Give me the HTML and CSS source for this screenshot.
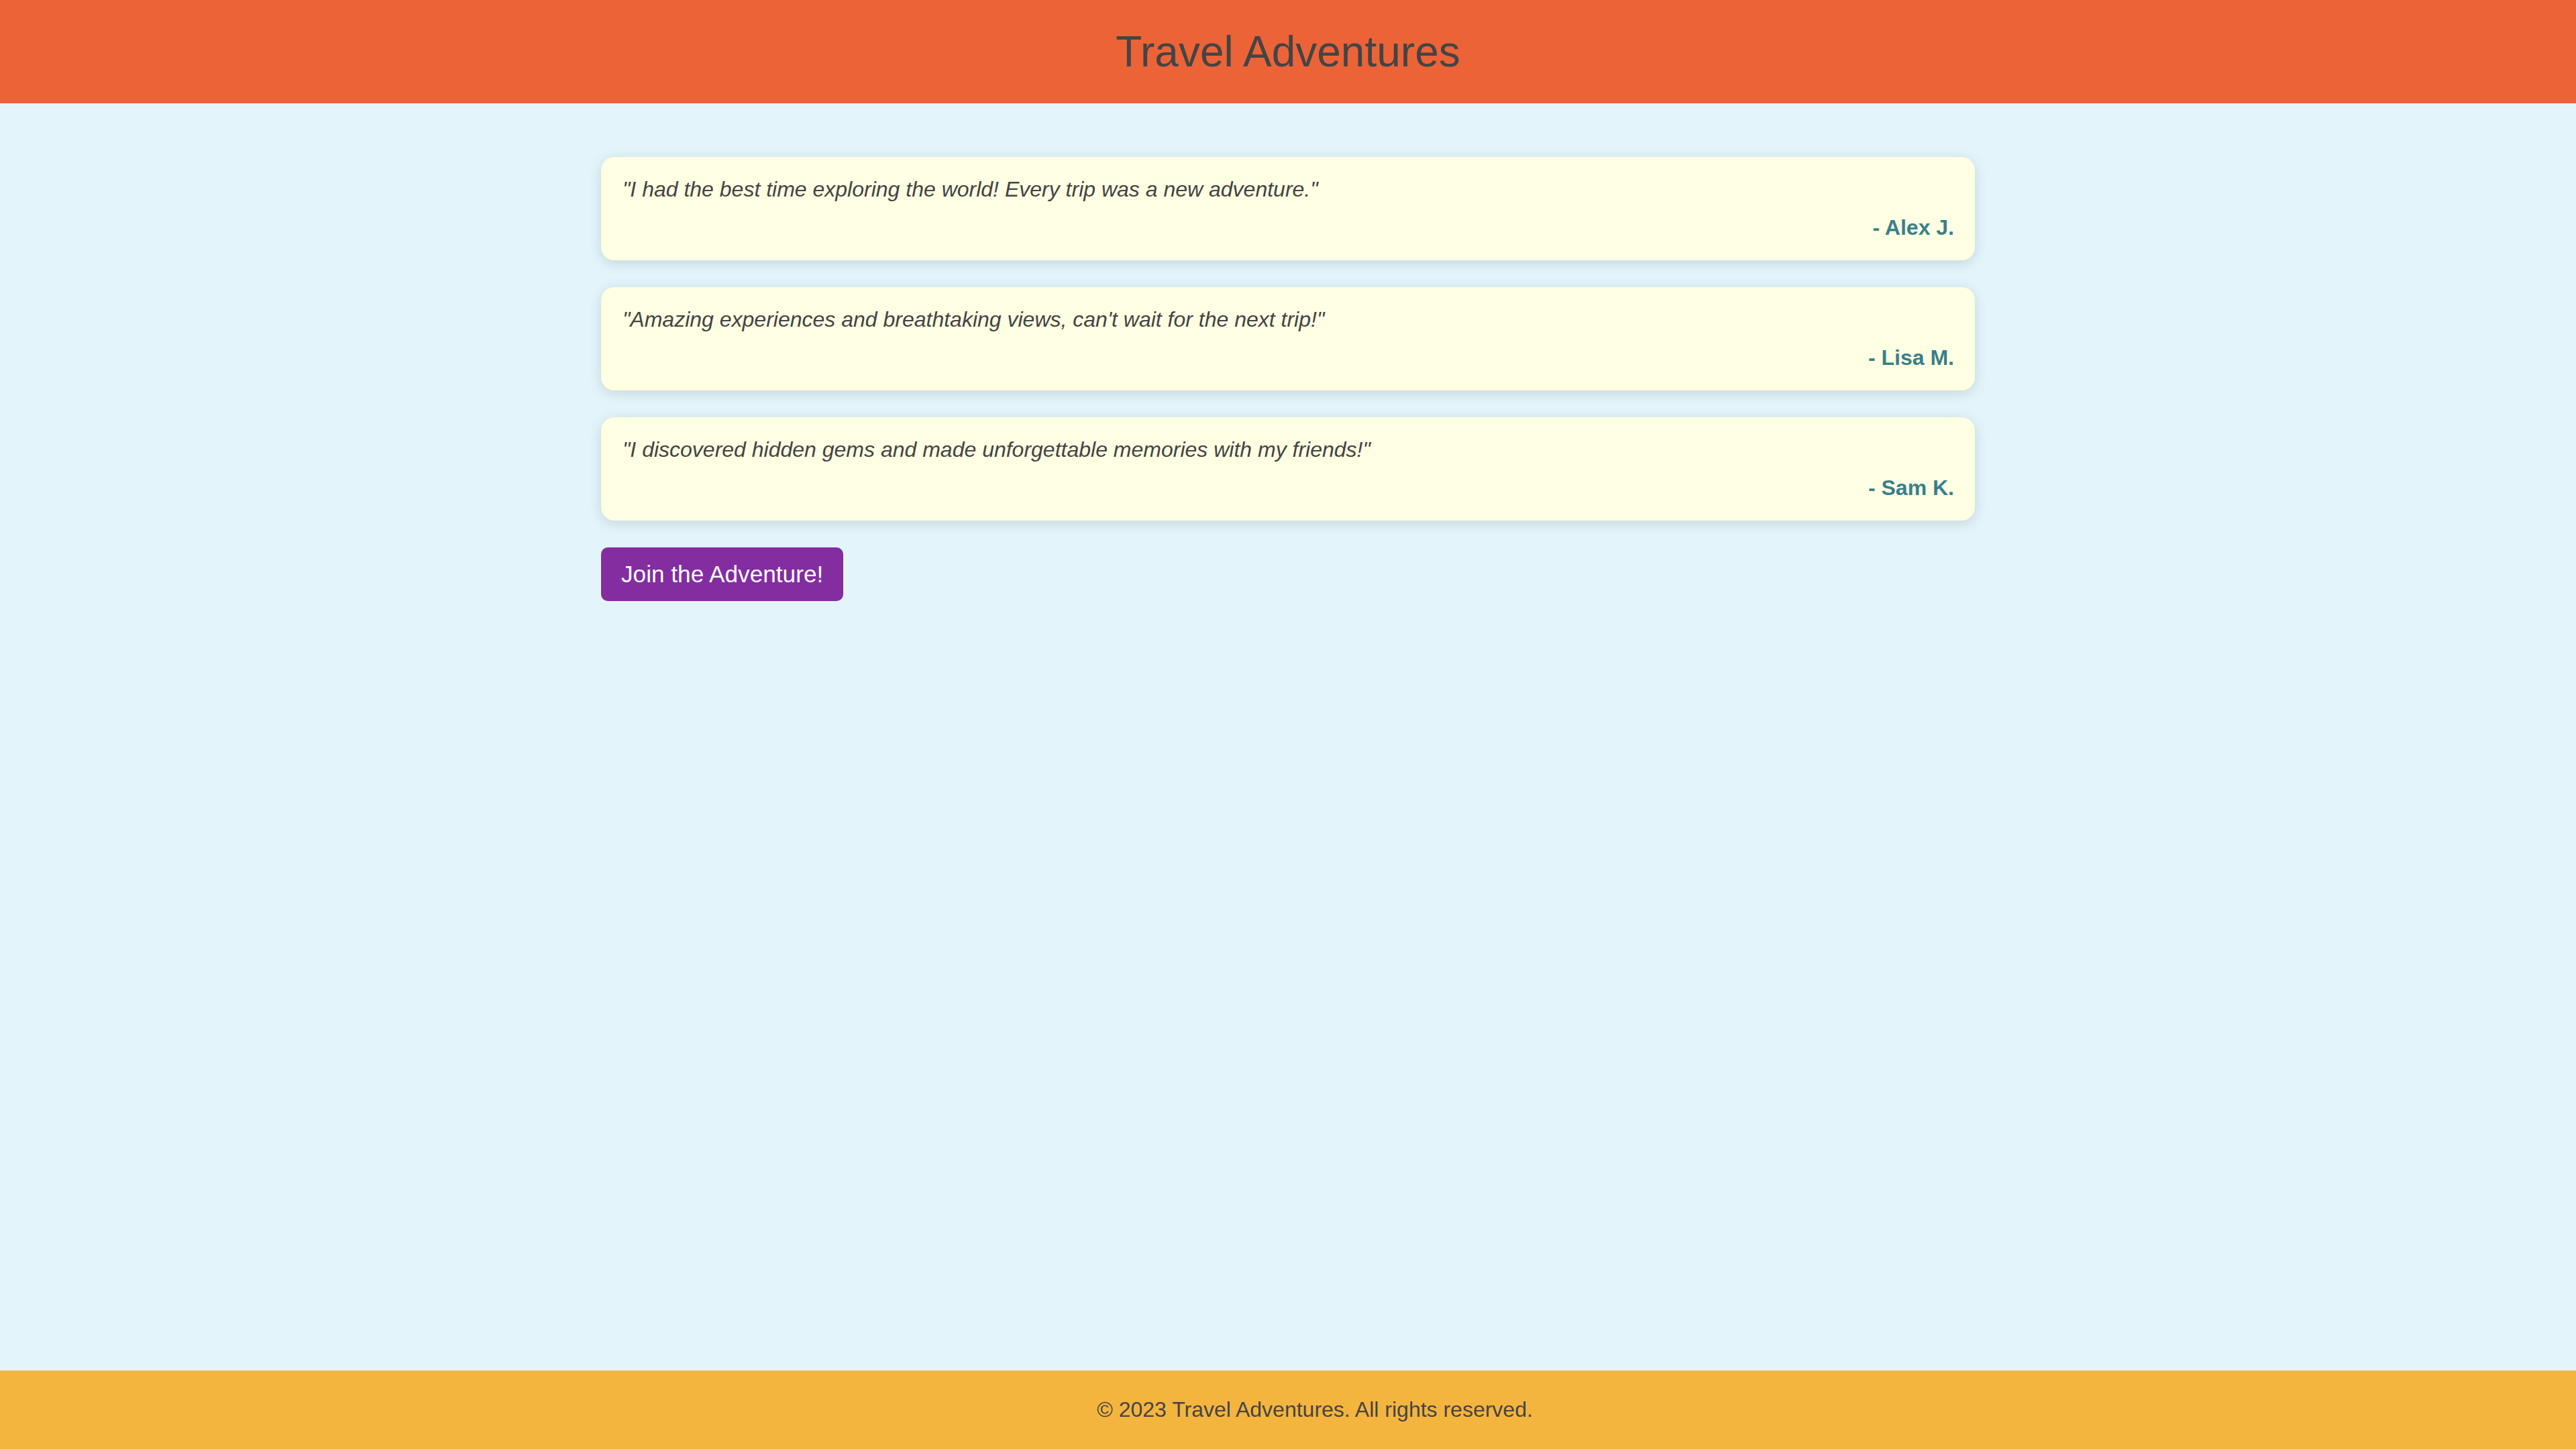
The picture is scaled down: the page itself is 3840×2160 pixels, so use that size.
FILE: index.html
```html
<!DOCTYPE html>
<html lang="en">
<head>
<meta charset="utf-8">
<title>Travel Adventures</title>
<link rel="stylesheet" href="styles.css">
</head>
<body>
<div class="page">
  <header class="site-header">
    <h1 class="title">Travel Adventures</h1>
  </header>
  <main class="content">
    <div class="testimonial">
      <p class="quote">"I had the best time exploring the world! Every trip was a new adventure."</p>
      <p class="author">- Alex J.</p>
    </div>
    <div class="testimonial">
      <p class="quote">"Amazing experiences and breathtaking views, can't wait for the next trip!"</p>
      <p class="author">- Lisa M.</p>
    </div>
    <div class="testimonial">
      <p class="quote">"I discovered hidden gems and made unforgettable memories with my friends!"</p>
      <p class="author">- Sam K.</p>
    </div>
    <div class="actions">
      <button class="join-btn" type="button">Join the Adventure!</button>
    </div>
  </main>
  <footer class="site-footer">
    <p class="copy">© 2023 Travel Adventures. All rights reserved.</p>
  </footer>
</div>
</body>
</html>
```

FILE: styles.css
```css
html, body {
  margin: 0;
  padding: 0;
}

body {
  font-family: "Liberation Sans", Arial, Helvetica, sans-serif;
  background: #e3f5fa;
  color: #444444;
  font-size: 32px;
  overflow: hidden;
}

.page {
  min-height: 100vh;
  display: flex;
  flex-direction: column;
}

.site-header {
  background: #ec6338;
  padding: 40px 0;
  text-align: center;
}

.title {
  margin: 0;
  font-size: 64px;
  font-weight: 400;
  color: #444444;
}

.content {
  flex: 1;
  width: 2048px;
  margin: 0 auto;
  padding: 80px 0 40px;
  display: flex;
  flex-direction: column;
  gap: 40px;
}

.testimonial {
  background: #feffe3;
  border-radius: 20px;
  padding: 30px 31px 30px 32px;
  box-shadow: 0 4px 20px rgba(0, 0, 0, 0.13);
  display: flex;
  flex-direction: column;
  gap: 20px;
}

.quote {
  margin: 0;
  font-style: italic;
  font-size: 32px;
  color: #444444;
}

.author {
  margin: 0;
  text-align: right;
  font-weight: 700;
  font-size: 32px;
  color: #3a7f8a;
}

.actions {
  display: flex;
}

.join-btn {
  font-family: "Liberation Sans", Arial, Helvetica, sans-serif;
  font-size: 35.2px;
  color: #ffffff;
  background: #842da1;
  border: none;
  border-radius: 10px;
  padding: 20px 30px;
  cursor: pointer;
}

.site-footer {
  background: #f4b53f;
  padding: 40px 0 40px 80px;
  text-align: center;
}

.copy {
  margin: 0;
  font-size: 32px;
  color: #444444;
}
```
